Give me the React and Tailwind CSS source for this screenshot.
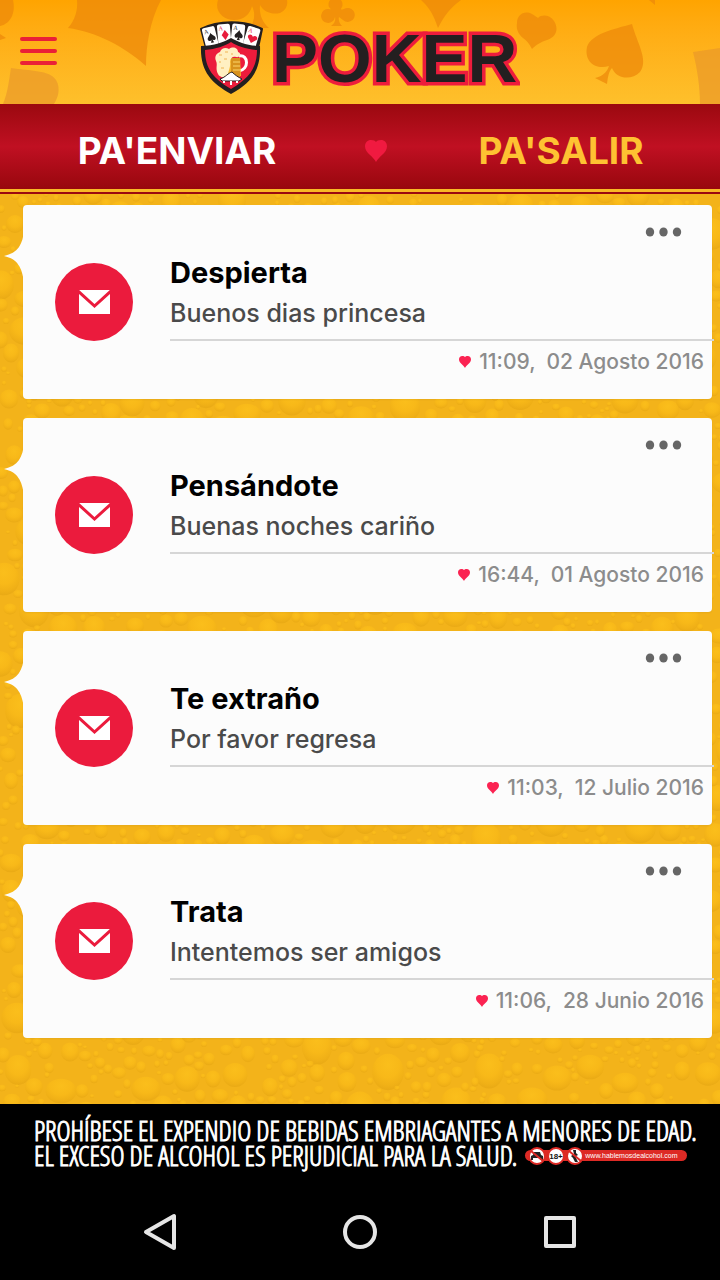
import React from 'react';

const messages = [
  { id: 1, title: 'Despierta', text: 'Buenos dias princesa', time: '11:09', date: '02 Agosto 2016' },
  { id: 2, title: 'Pensándote', text: 'Buenas noches cariño', time: '16:44', date: '01 Agosto 2016' },
  { id: 3, title: 'Te extraño', text: 'Por favor regresa', time: '11:03', date: '12 Julio 2016' },
  { id: 4, title: 'Trata', text: 'Intentemos ser amigos', time: '11:06', date: '28 Junio 2016' },
];

// Small seeded generator so the beer drops stay in the same place on every render
const makeDrops = () => {
  let seed = 11;
  const next = () => {
    seed = (seed * 16807) % 2147483647;
    return seed / 2147483647;
  };
  const drops = [];
  for (let tries = 0; tries < 9000; tries++) {
    const r = tries < 500 ? 9 + next() * 7 : tries < 2500 ? 5 + next() * 5 : 2 + next() * 3;
    const cx = Math.round(next() * 730);
    const cy = Math.round(next() * 920);
    const ry = r * (0.75 + next() * 0.45);
    if (drops.some((d) => Math.hypot(d.cx - cx, d.cy - cy) < (d.rx + r) * 0.95)) continue;
    drops.push({ cx, cy, rx: r, ry });
  }
  return drops;
};

const drops = makeDrops();

const Heart = ({ className }) => (
  <svg viewBox="0 0 22 22" className={className} aria-hidden="true">
    <path
      fill="currentColor"
      d="M11 22C9 17 0 13 0 6.500C0 2.500 2.500 0 6 0C8.500 0 10.300 .800 11 2C11.700 .800 13.500 0 16 0C19.500 0 22 2.500 22 6.500C22 13 13 17 11 22Z"
    />
  </svg>
);

const BeerBackground = () => (
  <svg
    className="absolute inset-0 h-full w-full"
    viewBox="0 0 720 910"
    preserveAspectRatio="xMidYMin slice"
    aria-hidden="true"
  >
    <defs>
      <radialGradient id="drop" cx="0.5" cy="0.3" r="0.72">
        <stop offset="0" stopColor="#fec31c" />
        <stop offset="0.5" stopColor="#fabb18" />
        <stop offset="0.8" stopColor="#efaf15" />
        <stop offset="1" stopColor="#e3a412" />
      </radialGradient>
    </defs>
    {drops.map((d, i) => (
      <ellipse key={i} cx={d.cx} cy={d.cy} rx={d.rx} ry={d.ry} fill="url(#drop)" opacity="0.7" />
    ))}
  </svg>
);

const HeaderPattern = () => (
  <svg
    className="absolute inset-0 h-full w-full"
    viewBox="0 0 720 104"
    preserveAspectRatio="xMidYMin slice"
    aria-hidden="true"
  >
    <g fill="#ee8a0a" opacity="0.75">
      <path d="M0 0H13C16 14 10 24 0 26ZM0 34L6 38L0 40Z" />
      <path d="M77 0H161C150 20 146 46 146 66C124 46 96 32 68 28C75 20 78 10 77 0Z" />
      <path d="M218 0C214 12 224 20 234 20C244 20 250 14 252 6C256 14 254 22 250 28H269C262 22 259 14 260 5C264 12 272 15 280 13C286 10 288 5 287 0Z" />
      <path d="M329 7A7 7 0 1 1 342 7C340 10 341 10 344 9A7 7 0 1 1 343 20L339 17C338 21 340 24 342 26H331C334 24 336 21 335 17A7 7 0 1 1 329 9C331 10 331 9 329 7Z" />
      <path d="M421 0H461C450 8 444 16 438 28C434 16 430 8 421 0Z" />
      <path d="M517 23C517 15 524 10 532 14C535 16 537 17 538 18C542 14 550 15 554 21C560 31 554 38 547 40C541 42 537 44 532 49C529 43 526 40 523 38C518 34 516 29 517 23Z" />
      <path d="M632 24C614 29 591 34 587 47C584 62 596 70 609 66C607 72 603 76 595 78L607 84C608 76 609 71 612 68C617 80 632 80 640 72C649 60 637 43 632 24Z" />
      <path d="M649 0H655V5Z" />
    </g>
    <g fill="#e9982a" opacity="0.7">
      <path d="M11 68C30 71 50 70 56 80C61 88 58 98 54 104H3C8 92 9 80 11 68Z" />
      <path d="M693 52L720 48V104H700C700 86 697 68 693 52Z" />
    </g>
  </svg>
);

const suits = {
  spade: 'M1 -3C2 0 5.500 1 5 3.500C4.500 5.500 2 5 1.500 4L2.500 7H-.500L.500 4C0 5 -2.500 5.500 -3 3.500C-3.500 1 0 0 1 -3Z',
  heart: 'M1 7L-3.500 2.500C-5 -.500 -1 -2.500 1 .500C3 -2.500 7 -.500 5.500 2.500Z',
  diamond: 'M1 -3L4.500 2L1 7L-2.500 2Z',
};

const PlayingCard = ({ x, y, angle, color, suit }) => (
  <g transform={`translate(${x} ${y}) rotate(${angle})`}>
    <rect x="-6.500" y="-9" width="13" height="20" rx="2" fill="#fff" />
    <text x="-5" y="-3" fontSize="6" fontFamily="Liberation Serif, serif" fill={color}>A</text>
    <path fill={color} d={suits[suit]} />
  </g>
);

const Logo = () => (
  <svg viewBox="0 0 320 76" className="h-[76px] w-[320px]" role="img" aria-label="Poker">
    <path d="M1 9C18 0 45 0 62 9L58 28H6Z" fill="#231f20" stroke="#231f20" strokeWidth="2" strokeLinejoin="round" />
    <PlayingCard x={10} y={16} angle={-14} color="#231f20" suit="spade" />
    <PlayingCard x={24} y={13} angle={-5} color="#e81c3c" suit="diamond" />
    <PlayingCard x={38} y={13} angle={6} color="#231f20" suit="spade" />
    <PlayingCard x={52} y={16} angle={17} color="#e81c3c" suit="heart" />
    <path
      d="M1 26C14 26 24 22 31 18C38 22 48 26 60 26C61 51 51 63 31 74C11 63 0 51 1 26Z"
      fill="#231f20"
    />
    <path d="M5 30C16 29 25 26 31 22C37 26 46 29 57 30C57 49 48 59 31 69C14 59 5 49 5 30Z" fill="#ec1c3c" />
    <path d="M39 36C49 34 49 50 39 51" fill="none" stroke="#fff" strokeWidth="3" />
    <path d="M19 38H40L41 56H21Z" fill="#f5b52c" />
    <path d="M31 38H40V57H31Z" fill="#d8921c" />
    <path d="M33 42H40M33 46H40M33 50H40" stroke="#fbd56a" strokeWidth="1" />
    <path
      d="M18 54C15 48 18 45 16 41C14 36 17 33 20 32C21 28 26 27 29 29C33 26 38 28 38 32C42 33 40 38 36 37C33 36 30 38 30 42C31 47 28 51 28 55C25 58 20 58 18 54Z"
      fill="#fff0c2"
    />
    <path d="M19 35H22M25 32H28M31 34H33M19 42H21M24 39H27M21 48H24" stroke="#f0b455" strokeWidth="1" />
    <path d="M20 59C26 57 28 53 32 52C35 55 38 57 42 59L39 61H22Z" fill="#fff" stroke="#231f20" strokeWidth="1" />
    <path d="M24 61V63M31 61V65M37 61V63" stroke="#fff" strokeWidth="2" />
    <text
      x="72"
      y="62"
      fontFamily="Liberation Sans, sans-serif"
      fontWeight="700"
      fontSize="69"
      fill="#231f20"
      stroke="#ee1c3c"
      strokeWidth="7"
      paintOrder="stroke"
    >
      POKER
    </text>
  </svg>
);

const MessageCard = ({ message }) => (
  <li className="relative flex items-center rounded-sm bg-[#fcfcfc] shadow-xs">
    <svg viewBox="0 0 20 52" className="absolute top-[25px] -left-[19px] h-[52px] w-5" aria-hidden="true">
      <path d="M20 0C19 14 14 23 0 26C14 29 18 38 20 52Z" fill="#fcfcfc" />
    </svg>
    <div className="ml-8 flex h-[78px] w-[78px] shrink-0 items-center justify-center rounded-full bg-[#eb1b3d]">
      <svg viewBox="0 0 31 24" className="h-6 w-[31px]" aria-hidden="true">
        <path d="M0 0H31V24H0Z" fill="#fff" />
        <path d="M-1 1L15.500 16L32 1" fill="none" stroke="#eb1b3d" strokeWidth="3" />
      </svg>
    </div>
    <div className="ml-[37px] flex min-w-0 flex-1 flex-col pt-[15px] pb-[21px]">
      <button type="button" aria-label="Opciones" className="mr-[30px] flex h-6 items-center self-end">
        <svg viewBox="0 0 37 10" className="h-2.5 w-[37px]" fill="#666" aria-hidden="true">
          <ellipse cx="5" cy="5" rx="4.2" ry="4.6" />
          <ellipse cx="18.500" cy="5" rx="4.2" ry="4.6" />
          <ellipse cx="32" cy="5" rx="4.2" ry="4.6" />
        </svg>
      </button>
      <h2 className="mt-[11px] text-[29px] leading-9 font-bold text-black">{message.title}</h2>
      <p className="mt-1.5 text-[25px] leading-8 font-medium text-[#4a4a4a]">{message.text}</p>
      <div className="mt-2.5 -mr-0.5 border-t-2 border-[#d6d6d6]" />
      <p className="mt-[5px] mr-2 flex items-center justify-end text-[21px] leading-8 font-medium whitespace-pre text-[#8c8c8c]">
        <Heart className="mr-2 h-3 w-3 text-[#fb2352]" />
        {`${message.time},  ${message.date}`}
      </p>
    </div>
  </li>
);

const LegalNotice = () => (
  <footer className="overflow-hidden bg-black pt-3.5 pb-4 pl-[34px] font-['Open_Sans_Condensed_Light','Open_Sans_Condensed',sans-serif] text-[27px] leading-[25px] whitespace-nowrap text-white [-webkit-text-stroke:1px_white]">
    <p>PROHÍBESE EL EXPENDIO DE BEBIDAS EMBRIAGANTES A MENORES DE EDAD.</p>
    <div className="flex items-center gap-2">
      <p>EL EXCESO DE ALCOHOL ES PERJUDICIAL PARA LA SALUD.</p>
      <a
        href="#hablemos"
        className="flex h-[11px] w-[162px] items-center rounded-full bg-[#dd2a25] font-['Liberation_Sans',sans-serif] text-[7px] [-webkit-text-stroke:0]"
      >
        <svg viewBox="0 0 60 20" className="h-5 w-[60px] shrink-0" aria-hidden="true">
          <g fill="#fff" stroke="#dd2a25" strokeWidth="2">
            <circle cx="12" cy="10" r="8" />
            <circle cx="31" cy="10" r="8" />
            <circle cx="50" cy="10" r="8" />
          </g>
          <path d="M6 10L8 9L9 6H15L16 9L18 10V14H16V12H8V14H6Z" fill="#222" />
          <text x="31" y="13" textAnchor="middle" fontSize="8" fontWeight="700" fill="#111">18+</text>
          <path d="M48 4H51V7L53 9L51 10V12L53 16H50L48 12L46 10L49 8Z" fill="#222" />
          <path d="M6 5L18 15M44 5L56 15" stroke="#dd2a25" strokeWidth="2" />
        </svg>
        www.hablemosdealcohol.com
      </a>
    </div>
  </footer>
);

const SystemBar = () => (
  <nav aria-label="Sistema" className="flex h-24 items-center justify-center gap-40 bg-black">
    <button type="button" aria-label="Atrás">
      <svg viewBox="0 0 40 40" className="h-10 w-10" fill="none" stroke="#e6e6e6" strokeWidth="4" strokeLinejoin="round">
        <path d="M34 4V36L6 20Z" />
      </svg>
    </button>
    <button type="button" aria-label="Inicio">
      <svg viewBox="0 0 40 40" className="h-10 w-10" fill="none" stroke="#e6e6e6" strokeWidth="4">
        <circle cx="20" cy="20" r="15" />
      </svg>
    </button>
    <button type="button" aria-label="Recientes">
      <svg viewBox="0 0 40 40" className="h-10 w-10" fill="none" stroke="#e6e6e6" strokeWidth="4" strokeLinejoin="round">
        <path d="M6 6H34V34H6Z" />
      </svg>
    </button>
  </nav>
);

const App = () => {
  return (
    <div className="flex min-h-screen flex-col bg-black font-[Inter,sans-serif]">
      <header className="relative h-[104px] bg-linear-to-b from-[#ffa400] to-[#fec02b]">
        <HeaderPattern />
        <div className="relative grid h-full grid-cols-[1fr_auto_1fr] items-center pt-3">
          <button type="button" aria-label="Menú" className="mb-3.5 ml-5 flex w-[37px] flex-col gap-2">
            <span className="h-1 rounded-full bg-[#ea2037]" />
            <span className="h-1 rounded-full bg-[#ea2037]" />
            <span className="h-1 rounded-full bg-[#ea2037]" />
          </button>
          <Logo />
        </div>
      </header>

      <nav className="grid h-[85px] grid-cols-[354fr_44fr_322fr] items-center justify-items-center bg-linear-to-b from-[#9b090f] via-[#c01022] to-[#98070d] pt-2 text-[37px] leading-none font-bold">
        <a href="#enviar" className="text-white">PA'ENVIAR</a>
        <Heart className="h-[22px] w-[22px] text-[#f01a40]" />
        <a href="#salir" className="pl-1 text-[#fec232]">PA'SALIR</a>
      </nav>
      <div className="h-[5px] border-b-2 border-[#9b0a10] bg-[#f9b926]" />

      <main className="relative flex-1 bg-[#f3b31a] pt-[11px] pr-2 pb-[66px] pl-[23px]">
        <BeerBackground />
        <ul className="relative flex flex-col gap-[19px]">
          {messages.map((message) => (
            <MessageCard key={message.id} message={message} />
          ))}
        </ul>
      </main>

      <LegalNotice />
      <SystemBar />
    </div>
  );
};

export default App;
